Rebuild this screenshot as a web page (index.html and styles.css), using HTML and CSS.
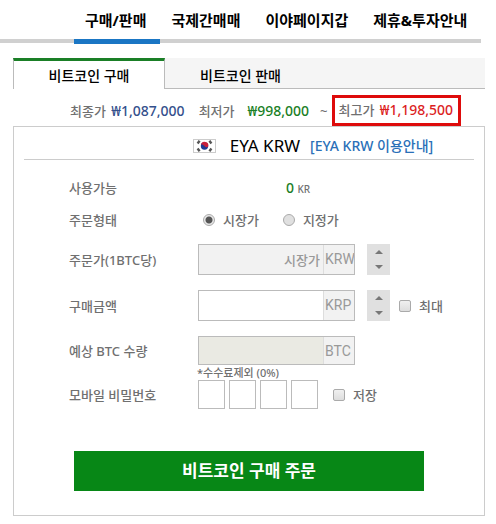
FILE: index.html
```
<!DOCTYPE html>
<html lang="ko">
<head>
    <meta charset="UTF-8">
    <meta name="viewport" content="width=device-width, initial-scale=1">
    <title>비트코인 구매</title>
    <link rel="stylesheet" href="styles.css">
</head>
<body>
<nav class="nav">
    <a href="#" class="on">구매/판매</a>
    <a href="#">국제간매매</a>
    <a href="#">이야페이지갑</a>
    <a href="#">제휴&amp;투자안내</a>
</nav>

<div class="main">
    <div class="tabs">
        <button type="button" class="tab on">비트코인 구매</button>
        <button type="button" class="tab">비트코인 판매</button>
    </div>

    <div class="price">
        <span class="last">최종가 <b class="blue">₩1,087,000</b></span>
        <span>최저가</span>
        <b class="green low">₩998,000</b>
        <span class="wave">~</span>
        <span class="high">최고가 <b class="red">₩1,198,500</b></span>
    </div>

    <form class="box">
        <div class="title">
            <svg class="flag" width="23" height="14" viewBox="0 0 23 14">
                <rect x="0.5" y="0.5" width="22" height="13" fill="#fff" stroke="#ccc"/>
                <circle cx="11.5" cy="7" r="3.7" fill="#1f3a93"/>
                <path d="M8 5.6a3.7 3.7 0 0 1 7.2 1.8c-1.2 1.3-2.6.9-3.7-.4C10.400 5.800 9 5 8 5.600z" fill="#c8203c"/>
                <g stroke="#555" stroke-width="2.400">
                    <path d="M4.600 4.400l2-2.600M16.400 12.200l2-2.600M4.600 9.600l2 2.600M16.400 1.800l2 2.600"/>
                </g>
            </svg>
            <h2>EYA KRW</h2>
            <a href="#">[EYA KRW 이용안내]</a>
        </div>

        <div class="list">
            <div class="row">
                <span class="name">사용가능</span>
                <div class="have"><b class="green">0</b> <small>KR</small></div>
            </div>
            <div class="row">
                <span class="name">주문형태</span>
                <label class="kind"><input type="radio" name="kind" checked>시장가</label>
                <label class="kind"><input type="radio" name="kind">지정가</label>
            </div>
            <div class="row field">
                <label class="name" for="cost">주문가(1BTC당)</label>
                <div class="input gray">
                    <input type="text" id="cost" value="시장가" disabled>
                    <span class="unit">KRW</span>
                </div>
                <div class="spin">
                    <button type="button" class="up" aria-label="주문가 올리기"></button>
                    <button type="button" class="down" aria-label="주문가 내리기"></button>
                </div>
            </div>
            <div class="row field">
                <label class="name" for="amount">구매금액</label>
                <div class="input">
                    <input type="text" id="amount">
                    <span class="unit">KRP</span>
                </div>
                <div class="spin">
                    <button type="button" class="up" aria-label="구매금액 올리기"></button>
                    <button type="button" class="down" aria-label="구매금액 내리기"></button>
                </div>
                <label class="check max"><input type="checkbox">최대</label>
            </div>
            <div class="row field short">
                <label class="name" for="count">예상 BTC 수량</label>
                <div class="input beige">
                    <input type="text" id="count" readonly>
                    <span class="unit">BTC</span>
                </div>
            </div>
            <p class="note">*수수료제외 (0%)</p>
            <div class="row short">
                <label class="name" for="pin">모바일 비밀번호</label>
                <div class="pins">
                    <input type="password" id="pin" maxlength="1">
                    <input type="password" maxlength="1" aria-label="비밀번호 2">
                    <input type="password" maxlength="1" aria-label="비밀번호 3">
                    <input type="password" maxlength="1" aria-label="비밀번호 4">
                </div>
                <label class="check save"><input type="checkbox">저장</label>
            </div>
        </div>

        <button type="submit" class="buy">비트코인 구매 주문</button>
    </form>
</div>
</body>
</html>
```
FILE: styles.css
```
*{
    margin: 0;
    padding: 0;
    box-sizing: border-box;
}
body{
    background: #fff;
    color: #707070;
    font: 500 13px/18px "Noto Sans", "Noto Sans CJK KR", sans-serif;
}
a{
    text-decoration: none;
}
button,
input{
    font: inherit;
    border-radius: 0;
}
b{
    font-weight: 500;
}
.blue{
    color: #34508c;
}
.green{
    color: #1a7f26;
}
.red{
    color: #dc1f1f;
}

/* 상단 메뉴 */
.nav{
    display: flex;
    gap: 1px;
    margin-right: 15px;
    padding-left: 73px;
    border-bottom: 4px solid #d0d0d0;
}
.nav a{
    position: relative;
    height: 39px;
    padding: 0 12px;
    color: #000;
    font-size: 15px;
    font-weight: bold;
    line-height: 40px;
    white-space: nowrap;
}
.nav .on::after{
    content: "";
    position: absolute;
    left: 1px;
    right: -2px;
    bottom: -5px;
    height: 5px;
    background: #1a76c4;
}

.main{
    padding: 15px 11px 8px 13px;
}
.tabs{
    display: flex;
    background: #f5f5f5;
}
.tab{
    width: 152px;
    height: 31px;
    border: 0;
    border-bottom: 1px solid #bbb;
    background: none;
    color: #000;
    font-size: 14px;
    line-height: 20px;
    padding-top: 5px;
    cursor: pointer;
}
.tab:last-child{
    flex: 1;
    padding-left: 35px;
    text-align: left;
}
.tab.on{
    padding-top: 2px;
    background: #fff;
    border: solid #bbb;
    border-width: 3px 1px 0;
    border-top-color: #1a7f26;
}

/* 시세 */
.price{
    display: flex;
    align-items: center;
    height: 37px;
    padding: 6px 0 0 57px;
    white-space: nowrap;
}
.price b{
    margin-left: 2px;
    font-size: 14px;
}
.last{
    margin-right: 14px;
}
.price .low{
    margin-left: 13px;
}
.wave{
    margin: 0 4px 0 11px;
}
.high{
    position: relative;
    z-index: 1;
    padding: 3px 5px 4px 4px;
    border: 3px solid #de0b0b;
}

.box{
    border: 1px solid #ccc;
    padding-bottom: 24px;
}
.title{
    display: flex;
    align-items: center;
    justify-content: center;
    height: 33px;
    margin: 0 10px;
    padding: 6px 0 0 128px;
    border-bottom: 1px solid #ccc;
    white-space: nowrap;
}
.title h2{
    margin: 0 10px 0 14px;
    color: #000;
    font-size: 17px;
    font-weight: 400;
    line-height: 20px;
}
.title a{
    color: #2a70b8;
    font-size: 14px;
}

/* 주문 */
.list{
    padding: 12px 0 0 55px;
}
.row{
    display: flex;
    align-items: center;
    height: 32px;
    white-space: nowrap;
}
.name{
    width: 129px;
}
.field{
    height: 31px;
    margin-top: 15px;
}
.row:nth-child(3){
    margin-top: 8px;
}
.row.short{
    height: 29px;
}
.have{
    padding-left: 88px;
}
.have b{
    font-size: 14px;
}
.have small{
    font-size: 10px;
}
.kind{
    display: flex;
    align-items: center;
    gap: 8px;
    margin: 0 19px 0 5px;
}
.kind input{
    appearance: none;
    width: 12px;
    height: 12px;
    border: 1px solid #aaa;
    border-radius: 50%;
    background: #e0e0e0;
}
.kind input:checked{
    background: radial-gradient(#555 0 3px, #e8e8e8 4px);
}
.input{
    display: flex;
    width: 157px;
    height: 100%;
    border: 1px solid #bbb;
    overflow: hidden;
}
.input input{
    flex: 1;
    min-width: 0;
    padding-right: 3px;
    border: 0;
    background: transparent;
    color: #999;
    text-align: right;
}
.gray{
    background: #f2f2f2;
}
.beige{
    background: #eaeae3;
}
.unit{
    width: 31px;
    padding-left: 1px;
    border-left: 1px solid #ddd;
    background: #f2f2f2;
    color: #999;
    font: 14px/29px Roboto, sans-serif;
}
.spin{
    display: flex;
    flex-direction: column;
    width: 23px;
    height: 100%;
    margin-left: 12px;
    background: #e0e0e0;
}
.spin button{
    display: flex;
    flex: 1;
    align-items: center;
    justify-content: center;
    border: 0;
    background: none;
}
.spin button::before{
    content: "";
    border: solid transparent;
    border-width: 0 4px;
}
.spin .up::before{
    border-bottom: 4px solid #777;
}
.spin .down::before{
    border-top: 4px solid #777;
}
.check{
    display: flex;
    align-items: center;
    gap: 8px;
}
.check input{
    appearance: none;
    width: 12px;
    height: 12px;
    border: 1px solid #aaa;
    border-radius: 2px;
    background: linear-gradient(#f0f0f0, #ddd);
}
.check input:checked{
    background: #777;
}
.max{
    margin-left: 9px;
}
.save{
    margin-left: 15px;
}
.note{
    padding-left: 128px;
    font-size: 11px;
    line-height: 15px;
}
.pins{
    display: flex;
    gap: 4px;
}
.pins input{
    width: 27px;
    height: 29px;
    border: 1px solid #bbb;
    text-align: center;
}
.buy{
    display: block;
    width: calc(100% - 120px);
    height: 40px;
    margin: 42px auto 0;
    border: 0;
    background: #078716;
    color: #fff;
    font-size: 17px;
    font-weight: bold;
    cursor: pointer;
}
```
